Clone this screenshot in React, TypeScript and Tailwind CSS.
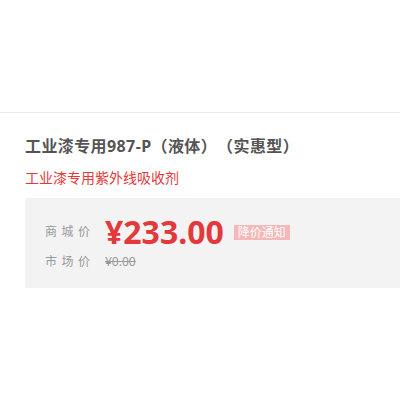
export default function App() {
  return (
    <div
      className="w-[400px] h-[400px] bg-white overflow-hidden [text-spacing-trim:space-all]"
      style={{ fontFamily: '"Noto Sans", "Noto Sans CJK SC", sans-serif' }}
    >
      <div className="h-[112px]" />
      <div className="h-px bg-[#ececec]" />
      <div className="pl-[25px]">
        <div className="mt-[21px] h-[24px] leading-[24px] text-[16px] tracking-[0.4px] font-bold text-[#555]">
          工业漆专用987-P（液体）（实惠型）
        </div>
        <div className="mt-[9px] h-[22px] leading-[22px] text-[14px] text-[#e4393c]">
          工业漆专用紫外线吸收剂
        </div>
        <div className="mt-[9px] h-[90px] bg-[#f3f3f3] pt-[14px] pl-[20px]">
          <div className="flex items-center h-[40px]">
            <span className="w-[60px] text-[12px] tracking-[4.5px] text-[#999]">商城价</span>
            <span className="text-[32px] leading-[40px] font-bold text-[#e4393c]">¥233.00</span>
            <span className="ml-[10px] h-[15px] leading-[15px] px-[4px] bg-[#f4b8b8] text-white text-[12px]">
              降价通知
            </span>
          </div>
          <div className="flex items-center h-[20px]">
            <span className="w-[60px] text-[12px] tracking-[4.5px] text-[#999]">市场价</span>
            <span className="text-[12px] text-[#999] line-through">¥0.00</span>
          </div>
        </div>
      </div>
    </div>
  );
}
